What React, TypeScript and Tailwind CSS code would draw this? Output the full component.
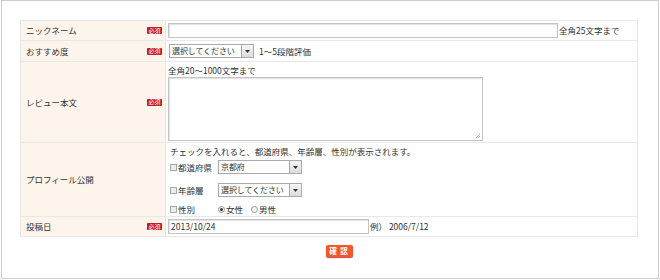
const font = { fontFamily: '"Noto Sans CJK JP", "Noto Sans", sans-serif' };

const Req = () => (
  <span className="flex h-[7px] w-[15px] items-center justify-center rounded-[1px] bg-[#c8161d] text-[6px] leading-none text-white">
    必須
  </span>
);

const Arrow = () => (
  <span className="flex h-full w-[12px] shrink-0 items-center justify-center border-l border-[#aaa] bg-gradient-to-b from-[#f6f6f6] to-[#dcdcdc]">
    <svg width="5" height="3" viewBox="0 0 5 3">
      <path d="M0 0h5L2.5 3z" fill="#333" />
    </svg>
  </span>
);

const Select = ({ label, width }: { label: string; width: string }) => (
  <div className={`flex h-[14px] items-center justify-between border border-[#aaa] bg-white ${width}`}>
    <span className="whitespace-nowrap pl-[2px] text-[8px] leading-none tracking-[-0.1px]">{label}</span>
    <Arrow />
  </div>
);

const Check = ({ label }: { label: string }) => (
  <span className="flex items-center">
    <span className="mr-px h-[7px] w-[7px] border border-[#a8a8a8] bg-[#ececec]" />
    {label}
  </span>
);

const Radio = ({ label, on }: { label: string; on?: boolean }) => (
  <span className="flex items-center">
    <span className="mr-px flex h-[7px] w-[7px] items-center justify-center rounded-full border border-[#999] bg-[#f4f4f4]">
      {on && <span className="h-[3px] w-[3px] rounded-full bg-[#333]" />}
    </span>
    {label}
  </span>
);

const Row = ({
  label,
  req,
  h,
  children,
  last,
}: {
  label: string;
  req?: boolean;
  h: string;
  children: React.ReactNode;
  last?: boolean;
}) => (
  <div className={`flex ${h} ${last ? "" : "border-b border-[#e8e8e8]"}`}>
    <div className="flex w-[145px] shrink-0 items-center justify-between border-r border-[#f0e6da] bg-[#fdf5ec] pl-[5px] pr-[3px]">
      <span>{label}</span>
      {req && <Req />}
    </div>
    <div className="flex-1 pl-[2px]">{children}</div>
  </div>
);

export default function App() {
  return (
    <div
      className="ml-px h-[279px] w-[658px] border border-[#cdcdcd] bg-white pl-[18px] pt-[19px] text-[8.5px] text-[#333]"
      style={font}
    >
      <div className="w-[618px] border border-[#e8e8e8]">
        <Row label="ニックネーム" req h="h-[20px]">
          <div className="flex h-full items-center">
            <div className="h-[15px] w-[390px] border border-[#c4c4c4] shadow-[inset_1px_1px_1px_#e2e2e2]" />
            <span className="ml-px">全角25文字まで</span>
          </div>
        </Row>
        <Row label="おすすめ度" req h="h-[21px]">
          <div className="flex h-full items-center pl-px">
            <Select label="選択してください" width="w-[85px]" />
            <span className="ml-[5px]">1～5段階評価</span>
          </div>
        </Row>
        <Row label="レビュー本文" req h="h-[81px]">
          <div className="flex flex-col pt-[3px]">
            <span className="leading-[10px]">全角20～1000文字まで</span>
            <div className="relative mt-[2px] h-[64px] w-[315px] border border-[#c4c4c4] shadow-[inset_1px_1px_1px_#e2e2e2]">
              <svg className="absolute bottom-px right-px" width="6" height="6" viewBox="0 0 6 6">
                <path d="M5 1L1 5M5 3L3 5" stroke="#aaa" strokeWidth="0.8" />
              </svg>
            </div>
          </div>
        </Row>
        <Row label="プロフィール公開" h="h-[74px]">
          <div className="flex flex-col pt-[3px] pl-[2px]">
            <span className="leading-[10px]">チェックを入れると、都道府県、年齢層、性別が表示されます。</span>
            <div className="mt-[4px] flex items-center">
              <div className="w-[48px]">
                <Check label="都道府県" />
              </div>
              <Select label="京都府" width="w-[84px]" />
            </div>
            <div className="mt-[9px] flex items-center">
              <div className="w-[48px]">
                <Check label="年齢層" />
              </div>
              <Select label="選択してください" width="w-[84px]" />
            </div>
            <div className="mt-[6px] flex items-center">
              <div className="w-[48px]">
                <Check label="性別" />
              </div>
              <Radio label="女性" on />
              <span className="ml-[8px]">
                <Radio label="男性" />
              </span>
            </div>
          </div>
        </Row>
        <Row label="投稿日" req h="h-[19px]" last>
          <div className="flex h-full items-center">
            <div className="flex h-[15px] w-[201px] items-center border border-[#c4c4c4] pl-[2px] shadow-[inset_1px_1px_1px_#e2e2e2]">
              2013/10/24
            </div>
            <span className="ml-px">例） 2006/7/12</span>
          </div>
        </Row>
      </div>
      <div className="mt-[8px] flex justify-center">
        <button className="flex h-[12px] w-[27px] items-center justify-center rounded-[2px] bg-[#f2592a] text-[7.5px] font-bold leading-none tracking-[1px] text-white shadow-[0_1px_1px_#c44]">
          確 認
        </button>
      </div>
    </div>
  );
}
